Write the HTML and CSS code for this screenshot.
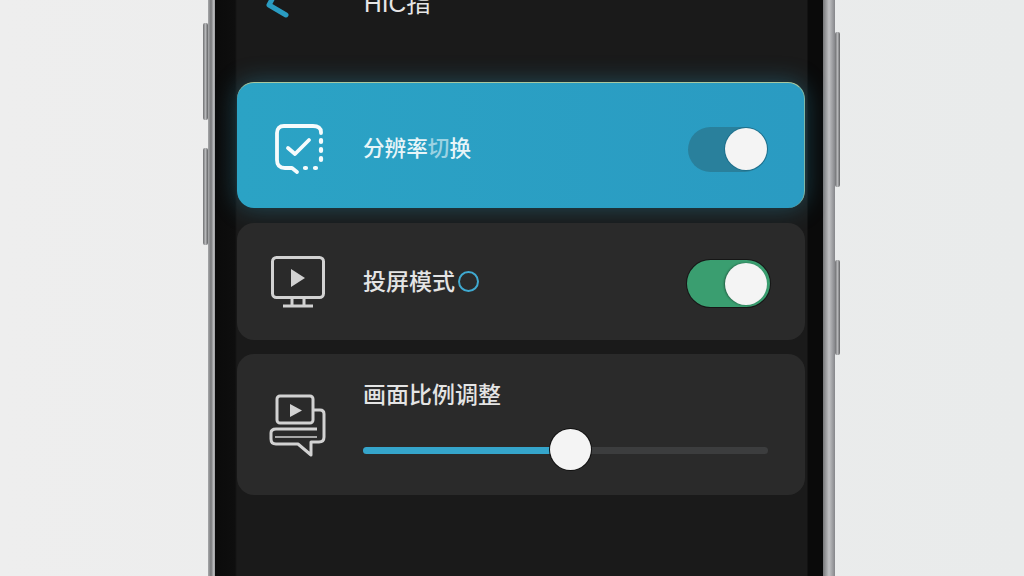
FILE: index.html
```html
<!DOCTYPE html>
<html lang="zh-CN">
    <head>
        <meta charset="UTF-8" />
        <title>HIC指</title>
        <link rel="stylesheet" href="styles.css">
    </head>
    <body>
        <div class="buttons buttons-left">
            <div class="side-btn volume-up"></div>
            <div class="side-btn volume-down"></div>
        </div>
        <div class="phone">
            <div class="screen">
                <div class="header">
                    <svg class="back" width="30" height="24" viewBox="0 0 30 24">
                        <path d="M13 -3 L5 12 L22 22" fill="none" stroke="#2a9cc2" stroke-width="5" stroke-linecap="round" stroke-linejoin="round" />
                    </svg>
                    <div class="title">HIC指</div>
                </div>
                <div class="card card-active">
                    <svg class="icon" width="60" height="60" viewBox="0 0 60 60">
                        <path d="M54 14 V13 Q54 7 46 7 H17 Q10 7 10 14 V41 Q10 49 18 49 H25 L30 53" fill="none" stroke="#f6fbfc" stroke-width="3.8" stroke-linecap="round" stroke-linejoin="round" />
                        <path d="M54 21 V23 M54 30 V32 M54 39 V41 M48 49 H49 M38 49 H39" fill="none" stroke="#f6fbfc" stroke-width="4.2" stroke-linecap="round" />
                        <path d="M21 29 L28 35 L42 21" fill="none" stroke="#f6fbfc" stroke-width="3.8" stroke-linecap="round" stroke-linejoin="round" />
                    </svg>
                    <div class="label label-small">分辨率<span class="faint">切</span>换</div>
                    <div class="toggle toggle-blue"><div class="knob"></div></div>
                </div>
                <div class="card card-cast">
                    <svg class="icon" width="60" height="60" viewBox="0 0 60 60">
                        <rect x="5.5" y="5.5" width="51" height="40" rx="4" fill="none" stroke="#d2d2d2" stroke-width="3" />
                        <path d="M24 17 L38 26 L24 35 Z" fill="#d2d2d2" />
                        <path d="M25 46 V53 M37 46 V53 M16 54 H46" fill="none" stroke="#d2d2d2" stroke-width="3" />
                    </svg>
                    <div class="label">投屏模式<span class="ring"></span></div>
                    <div class="toggle toggle-green"><div class="knob"></div></div>
                </div>
                <div class="card card-ratio">
                    <svg class="icon" width="60" height="60" viewBox="0 0 60 60">
                        <rect x="10" y="0" width="36" height="27" rx="3" fill="none" stroke="#d2d2d2" stroke-width="3" />
                        <path d="M23 8 L35 14.5 L23 21 Z" fill="#d2d2d2" />
                        <path d="M46 14 H53 Q57 14 57 18 V41 Q57 46 52 46 H44 V59 L31 48 H9 Q4 48 4 43 V37 Q4 33 9 33 H50" fill="none" stroke="#d2d2d2" stroke-width="3" stroke-linejoin="round" />
                        <path d="M8 41 H50" fill="none" stroke="#d2d2d2" stroke-width="1.6" />
                    </svg>
                    <div class="ratio-body">
                        <div class="label">画面比例调整</div>
                        <div class="slider">
                            <div class="track"><div class="fill"></div></div>
                            <div class="thumb"></div>
                        </div>
                    </div>
                </div>
            </div>
        </div>
        <div class="buttons buttons-right">
            <div class="side-btn power"></div>
            <div class="side-btn action"></div>
        </div>
    </body>
</html>
```

FILE: styles.css
```css
body {
    display: flex;
    height: 576px;
    margin: 0;
    padding-left: 203px;
    overflow: hidden;
    background: linear-gradient(to right, #eeeeee, #e9ebeb);
    font-family: "Liberation Sans", "Noto Sans CJK SC", sans-serif;
}
.buttons {
    display: flex;
    flex-direction: column;
    width: 5px;
    flex: none;
}
.buttons-left {
    padding-top: 23px;
    gap: 28px;
}
.buttons-right {
    padding-top: 32px;
    gap: 73px;
}
.side-btn {
    background: linear-gradient(to right, #6f7072, #b5b6b8 50%, #5f6062);
    border-radius: 2px;
}
.volume-up,
.volume-down {
    height: 97px;
}
.power {
    height: 155px;
}
.action {
    height: 95px;
}
.phone {
    width: 627px;
    flex: none;
    display: flex;
    box-sizing: border-box;
    padding: 0 12px 0 7px;
    background: linear-gradient(to right, #a8a9ab 0, #77787a 3px, #c2c3c5 6px, #8b8c8e 7px, #0a0a0a 8px, #0a0a0a 612px, #77787a 615px, #c0c1c3 621px, #85868a 627px);
}
.screen {
    flex: 1;
    padding: 0 16px 0 22px;
    background: linear-gradient(to right, #0b0b0b 0, #0e0e0e 20px, #1a1a1a 22px, #1a1a1a 592px, #0a0a0a 593px);
}
.header {
    display: flex;
    align-items: flex-end;
    height: 17px;
    margin-bottom: 65px;
    padding-left: 27px;
}
.back {
    flex: none;
    margin-right: 70px;
    overflow: visible;
}
.title {
    flex: none;
    font-size: 24.5px;
    line-height: 26px;
    color: #e6e6e6;
}
.card {
    display: flex;
    align-items: center;
    box-sizing: border-box;
    width: 568px;
    padding-left: 30px;
    padding-right: 38px;
    border-radius: 17px;
    background-color: #2a2a2a;
    color: #e4e4e4;
}
.card-active {
    height: 126px;
    margin-bottom: 15px;
    padding-top: 7px;
    padding-right: 37px;
    background: linear-gradient(to right, #2ba3c5, #2a9bc2);
    border-top: 1px solid #a8c8a0;
    border-right: 1px solid #7fb8a8;
    box-shadow: 0 0 24px rgba(50, 170, 205, 0.35);
    color: #e8f5f8;
}
.card-cast {
    height: 117px;
    margin-bottom: 14px;
    padding-right: 35px;
}
.card-ratio {
    height: 141px;
    padding-top: 2px;
    padding-right: 37px;
}
.icon {
    flex: none;
    margin-right: 36px;
    overflow: visible;
}
.label {
    display: flex;
    align-items: center;
    flex: 1;
    font-size: 23px;
    font-weight: 500;
    line-height: 30px;
}
.label-small {
    font-size: 21.6px;
}
.faint {
    opacity: 0.6;
}
.ring {
    width: 17px;
    height: 17px;
    margin-left: 3px;
    border: 2.5px solid #3fa9d0;
    border-radius: 50%;
}
.toggle {
    display: flex;
    align-items: center;
    justify-content: flex-end;
    flex: none;
    border-radius: 24px;
}
.toggle-blue {
    width: 79px;
    height: 45px;
    background-color: #29809c;
}
.toggle-green {
    width: 83px;
    height: 47px;
    margin-top: 4px;
    padding-right: 3px;
    box-sizing: border-box;
    background-color: #3a9e70;
    box-shadow: 0 0 0 1px #161616;
}
.knob {
    width: 42px;
    height: 42px;
    border-radius: 50%;
    background-color: #f4f4f4;
}
.toggle-green .knob {
    box-shadow: -1px 0 2px rgba(0, 0, 0, 0.4);
}
.toggle-blue .knob {
    box-shadow: 0 0 0 1px #1d6f8c;
}
.ratio-body {
    flex: 1;
    display: flex;
    flex-direction: column;
    gap: 19px;
}
.ratio-body .label {
    flex: none;
}
.slider {
    position: relative;
    display: flex;
    align-items: center;
    height: 42px;
}
.track {
    width: 100%;
    height: 7px;
    border-radius: 4px;
    background-color: #3c3d3e;
}
.fill {
    width: 51%;
    height: 100%;
    border-radius: 4px;
    background-color: #35a5cb;
}
.thumb {
    position: absolute;
    left: 187px;
    top: 0;
    width: 41px;
    height: 41px;
    border-radius: 50%;
    background-color: #f4f4f4;
    box-shadow: 0 0 0 1px #111;
}
```
